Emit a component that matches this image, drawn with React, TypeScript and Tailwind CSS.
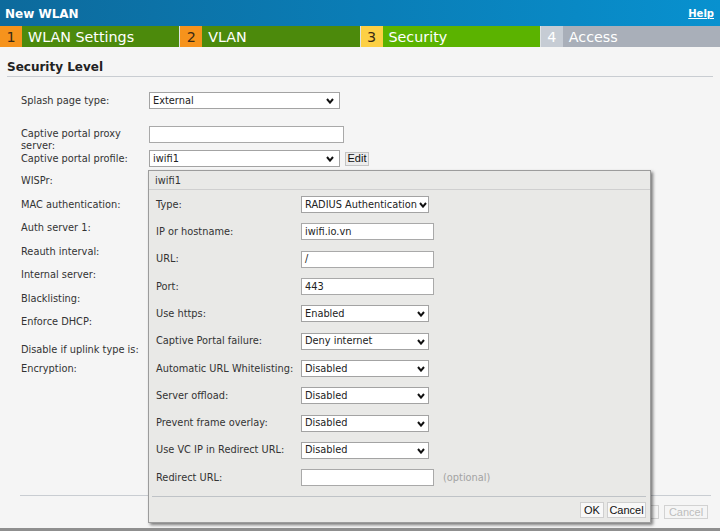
import React from "react";

function Chevron({ right }: { right: string }) {
  return (
    <svg
      className={`absolute top-[5px] ${right}`}
      width="8"
      height="6"
      viewBox="0 0 8 6"
    >
      <polyline points="1,1 4,4.6 7,1" stroke="#111" strokeWidth="2" fill="none" />
    </svg>
  );
}

function Sel({ value, w, right }: { value: string; w: string; right: string }) {
  return (
    <div
      className={`relative flex h-[17px] items-center overflow-hidden border border-[#a3a3a3] bg-white pl-[3px] pt-[1px] text-[#222] ${w}`}
    >
      <span className="whitespace-nowrap">{value}</span>
      <Chevron right={right} />
    </div>
  );
}

function Inp({ value, w }: { value?: string; w: string }) {
  return (
    <div
      className={`flex h-[17px] items-center border border-[#a9a9a9] bg-white pl-[3px] pt-[1px] text-[#222] ${w}`}
    >
      <span className="whitespace-nowrap">{value ?? ""}</span>
    </div>
  );
}

function Tab({
  n,
  label,
  boxCls,
  bodyCls,
  numCls,
}: {
  n: string;
  label: string;
  boxCls: string;
  bodyCls: string;
  numCls: string;
}) {
  return (
    <div className={`flex flex-1 items-center ${bodyCls}`}>
      <div
        className={`flex h-full w-[22px] items-center justify-center pt-[2px] text-[14.3px] ${boxCls} ${numCls}`}
      >
        {n}
      </div>
      <div className="pl-[6px] pt-[2px] text-[14.3px] text-white">{label}</div>
    </div>
  );
}

function LabelRow({ text, h }: { text: string; h: string }) {
  return (
    <div className={`flex items-center pt-[1px] ${h}`}>
      <span>{text}</span>
    </div>
  );
}

function PRow({ label, children }: { label: string; children: React.ReactNode }) {
  return (
    <div className="flex h-[27.3px] items-center">
      <div className="w-[145px] whitespace-nowrap pt-[1px]">{label}</div>
      {children}
    </div>
  );
}

export default function App() {
  const btnBase =
    "flex items-center justify-center border font-['Liberation_Sans',Arial,sans-serif] text-[11px]";
  return (
    <div className="relative flex h-[531px] w-[720px] flex-col overflow-hidden bg-[#f5f5f5] font-['DejaVu_Sans',sans-serif] text-[9.8px] text-[#333]">
      {/* Header */}
      <div className="flex h-[26px] items-center justify-between bg-gradient-to-r from-[#0d6a9c] via-[#0a7db6] to-[#0891cf] pl-[5px] pr-[6px] pt-[1px]">
        <span className="text-[12px] font-bold text-white">New WLAN</span>
        <span className="text-[10px] font-bold text-white underline">Help</span>
      </div>

      {/* Tabs */}
      <div className="flex h-[21px] gap-[1px] bg-[#dfe3e6]">
        <Tab n="1" label="WLAN Settings" boxCls="bg-[#f6931c]" bodyCls="bg-[#4c8a0c]" numCls="text-[#3a2a14]" />
        <Tab n="2" label="VLAN" boxCls="bg-[#f6931c]" bodyCls="bg-[#4c8a0c]" numCls="text-[#3a2a14]" />
        <Tab n="3" label="Security" boxCls="bg-[#fdd044]" bodyCls="bg-[#5bb300]" numCls="text-[#3a2a14]" />
        <Tab n="4" label="Access" boxCls="bg-[#c6ccd4]" bodyCls="bg-[#a9afb9]" numCls="text-white" />
      </div>

      {/* Main */}
      <div className="flex flex-1 flex-col">
        <div className="mx-[7px] border-b border-[#c9cdd2] pb-[1px] pt-[13px] text-[12px] font-bold leading-[15px] text-[#222]">
          Security Level
        </div>

        <div className="flex flex-col pl-[21px]">
          <div className="mt-[15px] flex h-[17px] items-center">
            <div className="w-[128px] pt-[1px]">Splash page type:</div>
            <Sel value="External" w="w-[191px]" right="right-[5px]" />
          </div>
          <div className="mt-[17px] flex h-[24px] items-start">
            <div className="w-[128px] pt-[1.5px] leading-[12px]">
              Captive portal proxy
              <br />
              server:
            </div>
            <Inp w="w-[195px]" />
          </div>
          <div className="flex h-[17px] items-center">
            <div className="w-[128px] pt-[1px]">Captive portal profile:</div>
            <Sel value="iwifi1" w="w-[191px]" right="right-[5px]" />
            <div
              className={`${btnBase} ml-[5px] h-[14px] w-[24px] border-[#c4c4c4] bg-[#ececec] text-[#111]`}
            >
              Edit
            </div>
          </div>
          <div className="mt-[2.5px]" />
          <LabelRow text="WISPr:" h="h-[23.5px]" />
          <LabelRow text="MAC authentication:" h="h-[23.5px]" />
          <LabelRow text="Auth server 1:" h="h-[23.5px]" />
          <LabelRow text="Reauth interval:" h="h-[23.5px]" />
          <LabelRow text="Internal server:" h="h-[23.5px]" />
          <LabelRow text="Blacklisting:" h="h-[23.5px]" />
          <LabelRow text="Enforce DHCP:" h="h-[23.5px]" />
          <div className="mt-[4px]" />
          <LabelRow text="Disable if uplink type is:" h="h-[24px]" />
          <LabelRow text="Encryption:" h="h-[14px]" />
        </div>

        {/* Footer */}
        <div className="ml-[20px] mr-[9px] mt-auto border-t border-[#c9cdd2] pb-[9px] pt-[9px]">
          <div className="flex h-[14px] justify-end gap-[5px] pr-[3px]">
            <div className={`${btnBase} w-[24px] border-[#d2d2d2] bg-[#f5f5f5]`} />
            <div className={`${btnBase} w-[44px] border-[#d2d2d2] bg-[#f5f5f5] text-[#bdbdbd]`}>Cancel</div>
          </div>
        </div>
      </div>
      <div className="h-[3px] bg-[#8f8f8f]" />

      {/* Popup */}
      <div className="absolute left-[148px] top-[170px] flex h-[353px] w-[503px] flex-col border border-[#9c9c9c] bg-[#e9e9e7] shadow-[2px_2px_3px_rgba(0,0,0,0.5)]">
        <div className="flex h-[19px] items-center border-b border-[#cfcfcf] pl-[6px] pt-[2px]">iwifi1</div>
        <div className="flex flex-col pl-[7px] pt-[1px]">
          <PRow label="Type:">
            <Sel value="RADIUS Authentication" w="w-[128px]" right="right-[1px]" />
          </PRow>
          <PRow label="IP or hostname:">
            <Inp value="iwifi.io.vn" w="w-[133px]" />
          </PRow>
          <PRow label="URL:">
            <Inp value="/" w="w-[133px]" />
          </PRow>
          <PRow label="Port:">
            <Inp value="443" w="w-[133px]" />
          </PRow>
          <PRow label="Use https:">
            <Sel value="Enabled" w="w-[128px]" right="right-[3px]" />
          </PRow>
          <PRow label="Captive Portal failure:">
            <Sel value="Deny internet" w="w-[128px]" right="right-[3px]" />
          </PRow>
          <PRow label="Automatic URL Whitelisting:">
            <Sel value="Disabled" w="w-[128px]" right="right-[3px]" />
          </PRow>
          <PRow label="Server offload:">
            <Sel value="Disabled" w="w-[128px]" right="right-[3px]" />
          </PRow>
          <PRow label="Prevent frame overlay:">
            <Sel value="Disabled" w="w-[128px]" right="right-[3px]" />
          </PRow>
          <PRow label="Use VC IP in Redirect URL:">
            <Sel value="Disabled" w="w-[128px]" right="right-[3px]" />
          </PRow>
          <PRow label="Redirect URL:">
            <Inp w="w-[133px]" />
            <span className="ml-[9px] pt-[1px] text-[#a3a3a3]">(optional)</span>
          </PRow>
        </div>
        <div className="ml-[3px] mr-[4px] mt-[4.7px] border-t border-[#bfc3c7]" />
        <div className="flex justify-end gap-[3px] pr-[4px] pt-[5px]">
          <div className={`${btnBase} h-[16px] w-[24px] border-[#cfcfcf] bg-[#f8f8f8] text-[#111]`}>OK</div>
          <div className={`${btnBase} h-[16px] w-[39px] border-[#cfcfcf] bg-[#f8f8f8] text-[#111]`}>Cancel</div>
        </div>
      </div>
    </div>
  );
}
